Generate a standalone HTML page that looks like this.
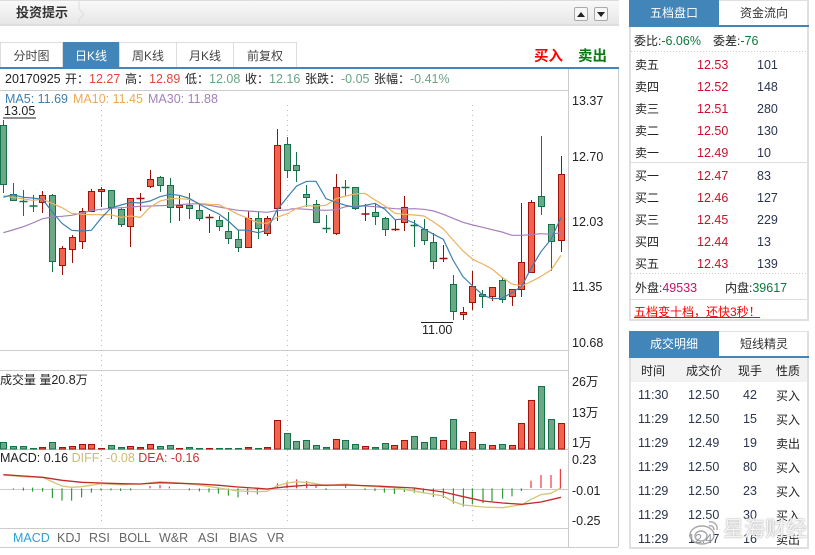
<!DOCTYPE html>
<html lang="zh"><head><meta charset="utf-8"><title>K线</title>
<style>
html,body{margin:0;padding:0;background:#fff;}
body{width:815px;height:555px;overflow:hidden;position:relative;font-family:"Liberation Sans","Noto Sans CJK SC",sans-serif;font-size:12.5px;color:#333;}
.a{position:absolute;white-space:nowrap;line-height:16px;}
.bar{left:0;top:0;width:619px;height:26px;background:linear-gradient(#f9f9f9,#e7e7e7);border-top:1px solid #ddd;border-bottom:2px solid #ddd;box-sizing:border-box;}
.tab{position:absolute;top:42px;height:25px;line-height:26px;text-align:center;font-size:12px;background:#fff;border:1px solid #ddd;border-bottom:0;box-sizing:border-box;color:#444;}
.on{background:#4285b8;color:#fff;border-color:#4285b8;}
.btn{position:absolute;top:7px;width:14px;height:14px;border:1px solid #aaa;border-radius:2px;background:#f6f6f6;box-sizing:border-box;}
.p{position:absolute;border:2px solid #e0e0e0;border-top-width:1px;box-sizing:border-box;}
.rt{position:absolute;width:90px;text-align:center;font-size:12px;line-height:26px;height:26px;}
.r{color:#c8102a;}.k{color:#2b3550;}.g{color:#69a585;}.d{color:#222;}.c{color:#222;font-size:12px;}.h{color:#e0483c;}
.hr{position:absolute;height:0;}
</style></head><body>
<div class="a bar"></div>
<div class="a" style="left:16px;top:5px;font-size:13px;font-weight:bold;letter-spacing:0;color:#333;">投资提示</div>
<svg class="a" style="left:76px;top:1px" width="10" height="24"><path d="M3 0 V8 L8 13 L3 18 V24" fill="none" stroke="#ddd"/></svg>
<div class="btn" style="left:574px"></div><div class="btn" style="left:594px"></div>
<svg class="a" style="left:574px;top:7px" width="34" height="14"><path d="M3 10H11L7 5Z M23 5H31L27 10Z" fill="#222"/></svg>
<div class="tab" style="left:0;width:63px">分时图</div>
<div class="tab on" style="left:63px;width:56px">日K线</div>
<div class="tab" style="left:119px;width:58px">周K线</div>
<div class="tab" style="left:176px;width:58px">月K线</div>
<div class="tab" style="left:233px;width:64px">前复权</div>
<div class="a" style="left:534px;top:49px;font-size:14.5px;font-weight:bold;color:#f00;">买入</div>
<div class="a" style="left:578px;top:49px;font-size:14.5px;font-weight:bold;color:#0a7a12;">卖出</div>
<div class="a" style="left:0;top:67px;width:619px;height:2px;background:#4285b8"></div>

<svg class="a" style="left:0;top:0" width="620" height="555">
<g stroke="#ccc" fill="none">
<path d="M0 90.5H568M0 350.5H568M0 370.5H568M0 449.5H568M0 528.5H568M0 547.5H618M568.5 69V547M618.5 69V547"/>
<path d="M0 489.5H568"/>
<path d="M101.5 105V525M287.5 105V525M472.5 105V525" stroke-dasharray="1 4" stroke="#bbb"/>
</g>
<!-- wicks -->
<path fill="none" stroke="#15714a" d="M3.5 120V193M13.5 183V201M23.5 190V216M33.5 195V212M52.5 194V272M111.5 190V219M121.5 208V227M160.5 176V192M170.5 178V223M189.5 193V219M199.5 204V221M219.5 216V231M228.5 212V244M238.5 230V252M258.5 212V239M287.5 137V178M296.5 152V182M306.5 185V207M316.5 200V222M326.5 215V233M345.5 180V196M355.5 187V210M375.5 203V225M385.5 217V236M414.5 220V247M424.5 219V245M433.5 233V269M453.5 275V320M482.5 290V308M502.5 277V303M541.5 136V215M551.5 224V271"/>
<path fill="none" stroke="#990f0a" d="M42.5 191V213M62.5 246V275M72.5 235V263M82.5 208V249M91.5 189V211M101.5 187V207M130.5 198V247M140.5 193V211M150.5 170V188M179.5 196V221M209.5 214V233M248.5 211V247M267.5 216V236M277.5 129V221M336.5 174V235M365.5 204V221M395.5 220V231M404.5 196V231M443.5 245V262M463.5 307V320M472.5 271V310M492.5 287V301M512.5 289V306M521.5 203V297M531.5 200V273M561.5 156V252"/>
<!-- crosses -->
<path fill="none" stroke="#15714a" d="M19.5 201.5H27.5M29.5 206H37.5M322.5 228.5H330.5M341.5 187.5H349.5M410.5 225.5H418.5" stroke-width="1.5"/>
<path fill="none" stroke="#990f0a" d="M136.5 198.5H144.5M205.5 217.5H213.5M361.5 214H369.5M391.5 229.5H399.5M439.5 258.5H447.5" stroke-width="1.5"/>
<!-- bodies -->
<path fill="#6ca885" stroke="#15714a" d="M.5 125.5h6V184.5h-6zM10.5 194.5h6V200.5h-6zM49.5 195.5h6V261.5h-6zM108.5 190.5h6V207.5h-6zM118.5 209.5h6V224.5h-6zM157.5 177.5h6V185.5h-6zM167.5 185.5h6V207.5h-6zM186.5 205.5h6V208.5h-6zM196.5 210.5h6V218.5h-6zM216.5 220.5h6V226.5h-6zM225.5 231.5h6V238.5h-6zM235.5 239.5h6V247.5h-6zM255.5 218.5h6V228.5h-6zM284.5 144.5h6V170.5h-6zM293.5 165.5h6V170.5h-6zM303.5 194.5h6V197.5h-6zM313.5 204.5h6V222.5h-6zM352.5 187.5h6V208.5h-6zM372.5 212.5h6V216.5h-6zM382.5 218.5h6V229.5h-6zM421.5 229.5h6V240.5h-6zM430.5 242.5h6V261.5h-6zM450.5 284.5h6V311.5h-6zM479.5 294.5h6V296.5h-6zM499.5 280.5h6V299.5h-6zM538.5 196.5h6V206.5h-6zM548.5 224.5h6V241.5h-6z"/>
<path fill="#f0634c" stroke="#a5120b" d="M39.5 195.5h6V202.5h-6zM59.5 248.5h6V265.5h-6zM69.5 237.5h6V249.5h-6zM79.5 211.5h6V241.5h-6zM88.5 191.5h6V211.5h-6zM98.5 189.5h6V191.5h-6zM127.5 198.5h6V226.5h-6zM147.5 179.5h6V186.5h-6zM176.5 205.5h6V207.5h-6zM245.5 218.5h6V247.5h-6zM264.5 218.5h6V233.5h-6zM274.5 145.5h6V208.5h-6zM333.5 187.5h6V233.5h-6zM401.5 207.5h6V222.5h-6zM460.5 312.5h6V314.5h-6zM469.5 286.5h6V302.5h-6zM489.5 287.5h6V296.5h-6zM509.5 289.5h6V296.5h-6zM518.5 262.5h6V289.5h-6zM528.5 202.5h6V272.5h-6zM558.5 174.5h6V240.5h-6z"/>
<!-- MA lines -->
<g fill="none" stroke-width="3.6" transform="translate(0,120) scale(.33333)">
<polyline stroke="#a67fbc" points="10,338 38,330 70,320 98,309 128,296 156,291 186,289 215,286 245,279 274,272 303,268 333,265 363,263 392,261 421,259 450,258 480,257 510,256 538,254 568,252 597,251 627,256 657,261 685,266 714,271 744,273 774,275 801,277 831,272 870,269"/>
<polyline stroke="#edb15f" points="10,227 38,232 70,237 98,241 128,238 156,250 186,263 215,280 245,283 274,284 303,284 333,284 363,292 392,288 421,292 450,262 480,243 510,236 538,236 568,238 597,250 627,253 657,254 685,268 714,283 744,295 774,308 801,310 831,292 870,278"/>
<polyline stroke="#3d7fb0" points="10,232 38,224 70,232 98,234 128,238 156,275 186,310 215,331 245,333 274,331 303,295 333,264 363,255 392,247 421,249 450,243 480,230 510,223 538,226 568,235 597,252 627,268 657,282 685,303 714,330 744,331 774,338 801,331 831,270 870,222"/>
</g>
<g fill="none" stroke-width="3.6" transform="translate(290,120) scale(.33333)">
<polyline stroke="#a67fbc" points="0,267 20,266 50,268 78,270 108,271 138,269 167,260 195,258 225,258 255,260 285,263 315,266 342,267 373,266 402,268 431,273 460,283 489,295 519,307 548,315 578,322 606,329 636,336 666,346 695,346 723,344 753,341 783,343 813,338"/>
<polyline stroke="#edb15f" points="0,276 20,265 50,257 78,258 108,256 138,236 167,228 195,222 225,220 255,240 285,258 315,280 342,283 373,285 402,288 431,306 460,327 489,360 519,393 548,418 578,432 606,447 636,472 666,492 695,498 723,485 753,469 783,450 813,406"/>
<polyline stroke="#3d7fb0" points="0,222 20,198 50,184 78,184 108,236 138,247 167,256 195,262 225,256 255,250 285,268 315,299 342,297 373,309 402,327 431,343 460,358 489,420 519,470 548,498 578,525 606,536 636,535 666,518 695,499 723,445 753,395 783,358 813,292"/>
</g>
<path d="M3 118H36M421 322.5H453" stroke="#222" fill="none"/>
<!-- volume -->
<path fill="#6ca885" stroke="#15714a" d="M.5 442.5h6V449h-6zM10.5 446.5h6V449h-6zM20.5 446.5h6V449h-6zM30.5 448.5h6V449h-6zM49.5 442.5h6V449h-6zM108.5 445.5h6V449h-6zM118.5 447.5h6V449h-6zM157.5 446.5h6V449h-6zM167.5 445.5h6V449h-6zM186.5 447.5h6V449h-6zM196.5 448.5h6V449h-6zM216.5 448.5h6V449h-6zM225.5 448.5h6V449h-6zM235.5 448.5h6V449h-6zM255.5 448.5h6V449h-6zM284.5 433.5h6V449h-6zM293.5 441.5h6V449h-6zM303.5 440.5h6V449h-6zM313.5 445.5h6V449h-6zM323.5 447.5h6V449h-6zM342.5 440.5h6V449h-6zM352.5 444.5h6V449h-6zM372.5 447.5h6V449h-6zM382.5 443.5h6V449h-6zM411.5 436.5h6V449h-6zM421.5 442.5h6V449h-6zM430.5 437.5h6V449h-6zM450.5 419.5h6V449h-6zM479.5 444.5h6V449h-6zM499.5 444.5h6V449h-6zM538.5 386.5h6V449h-6zM548.5 419.5h6V449h-6z"/>
<path fill="#f0634c" stroke="#a5120b" d="M39.5 447.5h6V449h-6zM59.5 447.5h6V449h-6zM69.5 446.5h6V449h-6zM79.5 444.5h6V449h-6zM88.5 444.5h6V449h-6zM98.5 448.5h6V449h-6zM127.5 446.5h6V449h-6zM137.5 447.5h6V449h-6zM147.5 444.5h6V449h-6zM176.5 448.5h6V449h-6zM206.5 448.5h6V449h-6zM245.5 447.5h6V449h-6zM264.5 447.5h6V449h-6zM274.5 420.5h6V449h-6zM333.5 439.5h6V449h-6zM362.5 446.5h6V449h-6zM391.5 445.5h6V449h-6zM401.5 440.5h6V449h-6zM440.5 440.5h6V449h-6zM460.5 441.5h6V449h-6zM469.5 432.5h6V449h-6zM489.5 445.5h6V449h-6zM509.5 445.5h6V449h-6zM518.5 423.5h6V449h-6zM528.5 400.5h6V449h-6zM558.5 423.5h6V449h-6z"/>
<!-- macd histogram -->
<g fill="none" stroke-width="3" transform="translate(0,360) scale(.33333)">
<path stroke="#0a8a14" d="M40 385V388M70 383V392M98 383V395M128 384V395M157 385V414M186 385V422M215 385V422M245 385V412M274 385V398M303 385V391M333 385V391M362 385V393M392 385V391M568 385V391M598 385V394M627 385V397M655 385V401M685 385V407M714 385V412M743 385V404M772 385V403"/>
<path stroke="#e8141c" d="M450 378V385M480 375V385M508 380V385M832 370V385M861 365V385M890 358V385M920 363V385"/>
<polyline stroke="#d3c777" stroke-width="4" points="10,345 70,350 128,352 156,365 186,378 215,382 245,380 303,371 363,374 421,372 480,365 538,369 597,375 657,384 714,393 774,395 801,394 831,378 861,369 890,365 930,368"/>
<polyline stroke="#c22a2a" stroke-width="4" points="10,344 70,348 128,352 186,361 245,367 303,369 363,371 421,372 480,368 538,370 597,372 657,376 714,381 774,385 801,387 861,380 930,375"/>
</g>
<g fill="none" stroke-width="3" transform="translate(310,360) scale(.33333)">
<path stroke="#0a8a14" d="M48 385V390M165 385V390M195 385V393M223 385V398M253 385V402M283 385V396M313 385V398M340 385V400M370 385V411M400 385V414M430 385V431M460 385V440M487 385V433M519 385V429M546 385V423M578 385V416M606 385V409M634 385V393"/>
<path stroke="#e8141c" d="M18 378V384M107 372V384M663 362V384M693 345V384M723 345V384M751 327V386"/>
<polyline stroke="#d3c777" stroke-width="4" points="0,368 48,377 107,372 165,378 253,383 340,398 400,408 430,425 460,435 519,441 578,443 636,434 663,418 693,404 723,400 750,385"/>
<polyline stroke="#c22a2a" stroke-width="4" points="0,376 107,375 195,378 313,384 400,396 460,410 519,423 578,429 636,433 693,426 753,412"/>
</g>
</svg>

<div class="a d" style="left:5px;top:71px">20170925</div>
<div class="a c" style="left:65px;top:71px">开：</div><div class="a h" style="left:89px;top:71px">12.27</div>
<div class="a c" style="left:125px;top:71px">高：</div><div class="a h" style="left:149px;top:71px">12.89</div>
<div class="a c" style="left:185px;top:71px">低：</div><div class="a g" style="left:209px;top:71px">12.08</div>
<div class="a c" style="left:245px;top:71px">收：</div><div class="a g" style="left:269px;top:71px">12.16</div>
<div class="a c" style="left:305px;top:71px">张跌：</div><div class="a g" style="left:341px;top:71px">-0.05</div>
<div class="a c" style="left:374px;top:71px">张幅：</div><div class="a g" style="left:410px;top:71px">-0.41%</div>
<div class="a" style="left:5px;top:91px;color:#3d7fb0">MA5: 11.69</div>
<div class="a" style="left:73px;top:91px;color:#edab55">MA10: 11.45</div>
<div class="a" style="left:148px;top:91px;color:#a67fbc">MA30: 11.88</div>
<div class="a d" style="left:4px;top:103px">13.05</div>
<div class="a d" style="left:422px;top:322px">11.00</div>
<div class="a d" style="left:0;top:372px;font-size:12px">成交量 量<span style="font-size:12.5px">20.8</span>万</div>
<div class="a d" style="left:0;top:450px">MACD: 0.16 <span style="color:#c9bd6f">DIFF: -0.08</span> <span style="color:#c8322c">DEA: -0.16</span></div>
<div class="a" style="left:13px;top:530px;color:#2aa3d6">MACD</div>
<div class="a" style="left:57px;top:530px;color:#666">KDJ</div>
<div class="a" style="left:89px;top:530px;color:#666">RSI</div>
<div class="a" style="left:119px;top:530px;color:#666">BOLL</div>
<div class="a" style="left:159px;top:530px;color:#666">W&amp;R</div>
<div class="a" style="left:198px;top:530px;color:#666">ASI</div>
<div class="a" style="left:229px;top:530px;color:#666">BIAS</div>
<div class="a" style="left:267px;top:530px;color:#666">VR</div>

<div class="a d" style="left:572px;top:93px">13.37</div>
<div class="a d" style="left:572px;top:149px">12.70</div>
<div class="a d" style="left:572px;top:214px">12.03</div>
<div class="a d" style="left:572px;top:279px">11.35</div>
<div class="a d" style="left:572px;top:335px">10.68</div>
<div class="a d" style="left:572px;top:374px">26万</div>
<div class="a d" style="left:572px;top:405px">13万</div>
<div class="a d" style="left:572px;top:435px">1万</div>
<div class="a d" style="left:572px;top:452px">0.23</div>
<div class="a d" style="left:572px;top:483px">-0.01</div>
<div class="a d" style="left:572px;top:513px">-0.25</div>

<!-- right panel 1 -->
<div class="p" style="left:629px;top:0;width:180px;height:321px"></div>
<div class="rt on" style="left:629px;top:0;background:#4285b8;color:#fff;">五档盘口</div>
<div class="rt" style="left:719px;top:0;color:#333">资金流向</div>
<div class="a" style="left:629px;top:25px;width:180px;height:2px;background:#4285b8"></div>
<div class="a c" style="left:634px;top:33px">委比:<span style="color:#0a7a3a;font-size:12.5px">-6.06%</span></div>
<div class="a c" style="left:713px;top:33px">委差:<span style="color:#0a7a3a;font-size:12.5px">-76</span></div>
<svg class="a" style="left:631px;top:0" width="176" height="320"><path d="M0 51.5H176M0 273.5H176" stroke="#ccc" stroke-dasharray="1 2"/><path d="M0 162.5H176M0 299.5H176" stroke="#ddd"/></svg>
<div class="a c" style="left:635px;top:57px">卖五</div><div class="a r" style="left:697px;top:57px">12.53</div><div class="a k" style="left:757px;top:57px">101</div>
<div class="a c" style="left:635px;top:79px">卖四</div><div class="a r" style="left:697px;top:79px">12.52</div><div class="a k" style="left:757px;top:79px">148</div>
<div class="a c" style="left:635px;top:101px">卖三</div><div class="a r" style="left:697px;top:101px">12.51</div><div class="a k" style="left:757px;top:101px">280</div>
<div class="a c" style="left:635px;top:123px">卖二</div><div class="a r" style="left:697px;top:123px">12.50</div><div class="a k" style="left:757px;top:123px">130</div>
<div class="a c" style="left:635px;top:145px">卖一</div><div class="a r" style="left:697px;top:145px">12.49</div><div class="a k" style="left:757px;top:145px">10</div>
<div class="a c" style="left:635px;top:168px">买一</div><div class="a r" style="left:697px;top:168px">12.47</div><div class="a k" style="left:757px;top:168px">83</div>
<div class="a c" style="left:635px;top:190px">买二</div><div class="a r" style="left:697px;top:190px">12.46</div><div class="a k" style="left:757px;top:190px">127</div>
<div class="a c" style="left:635px;top:212px">买三</div><div class="a r" style="left:697px;top:212px">12.45</div><div class="a k" style="left:757px;top:212px">229</div>
<div class="a c" style="left:635px;top:234px">买四</div><div class="a r" style="left:697px;top:234px">12.44</div><div class="a k" style="left:757px;top:234px">13</div>
<div class="a c" style="left:635px;top:256px">买五</div><div class="a r" style="left:697px;top:256px">12.43</div><div class="a k" style="left:757px;top:256px">139</div>
<div class="a c" style="left:635px;top:280px">外盘:<span style="color:#c8106a;font-size:12.5px">49533</span></div>
<div class="a c" style="left:725px;top:280px">内盘:<span style="color:#0a7a3a;font-size:12.5px">39617</span></div>
<div class="a" style="left:634px;top:305px;color:#f00;width:126px;height:12px;border-bottom:1px solid #f00;overflow:hidden;line-height:14px;font-size:12px">五档变十档，还快3秒！</div>

<!-- right panel 2 -->
<div class="p" style="left:629px;top:331px;width:180px;height:218px"></div>
<div class="rt" style="left:629px;top:331px;background:#4285b8;color:#fff;">成交明细</div>
<div class="rt" style="left:719px;top:331px;color:#333">短线精灵</div>
<div class="a" style="left:629px;top:356px;width:180px;height:2px;background:#4285b8"></div>
<div class="a" style="left:631px;top:358px;width:176px;height:24px;background:#f2f2f2"></div>
<div class="a c" style="left:641px;top:363px">时间</div><div class="a c" style="left:686px;top:363px">成交价</div><div class="a c" style="left:738px;top:363px">现手</div><div class="a c" style="left:776px;top:363px">性质</div>

<div class="a k" style="left:638px;top:387px">11:30</div><div class="a k" style="left:688px;top:387px">12.50</div><div class="a k" style="left:743px;top:387px">42</div><div class="a c" style="left:776px;top:388px">买入</div>
<div class="a k" style="left:638px;top:411px">11:29</div><div class="a k" style="left:688px;top:411px">12.50</div><div class="a k" style="left:743px;top:411px">15</div><div class="a c" style="left:776px;top:412px">买入</div>
<div class="a k" style="left:638px;top:435px">11:29</div><div class="a k" style="left:688px;top:435px">12.49</div><div class="a k" style="left:743px;top:435px">19</div><div class="a c" style="left:776px;top:436px">卖出</div>
<div class="a k" style="left:638px;top:459px">11:29</div><div class="a k" style="left:688px;top:459px">12.50</div><div class="a k" style="left:743px;top:459px">80</div><div class="a c" style="left:776px;top:460px">买入</div>
<div class="a k" style="left:638px;top:483px">11:29</div><div class="a k" style="left:688px;top:483px">12.50</div><div class="a k" style="left:743px;top:483px">23</div><div class="a c" style="left:776px;top:484px">买入</div>
<div class="a k" style="left:638px;top:507px">11:29</div><div class="a k" style="left:688px;top:507px">12.50</div><div class="a k" style="left:743px;top:507px">30</div><div class="a c" style="left:776px;top:508px">买入</div>
<div class="a k" style="left:638px;top:531px">11:29</div><div class="a k" style="left:688px;top:531px">12.47</div><div class="a k" style="left:743px;top:531px">16</div><div class="a c" style="left:776px;top:532px">卖出</div>

<!-- watermark -->
<svg class="a" style="left:688px;top:518px" width="36" height="30"><g fill="none" stroke="#999" stroke-width="1.4" opacity=".85"><ellipse cx="14" cy="17" rx="12" ry="9" fill="#fff" fill-opacity=".6"/><ellipse cx="13" cy="18" rx="6" ry="5"/><path d="M21 4C26 3 30 7 29 12M21 8C24 7 26 9 26 12"/></g></svg>
<div class="a" style="left:723px;top:517px;font-size:21px;line-height:26px;color:rgba(255,255,255,.85);text-shadow:0 0 1px #aaa,0 0 2px #bbb;">星海财经</div>
</body></html>
